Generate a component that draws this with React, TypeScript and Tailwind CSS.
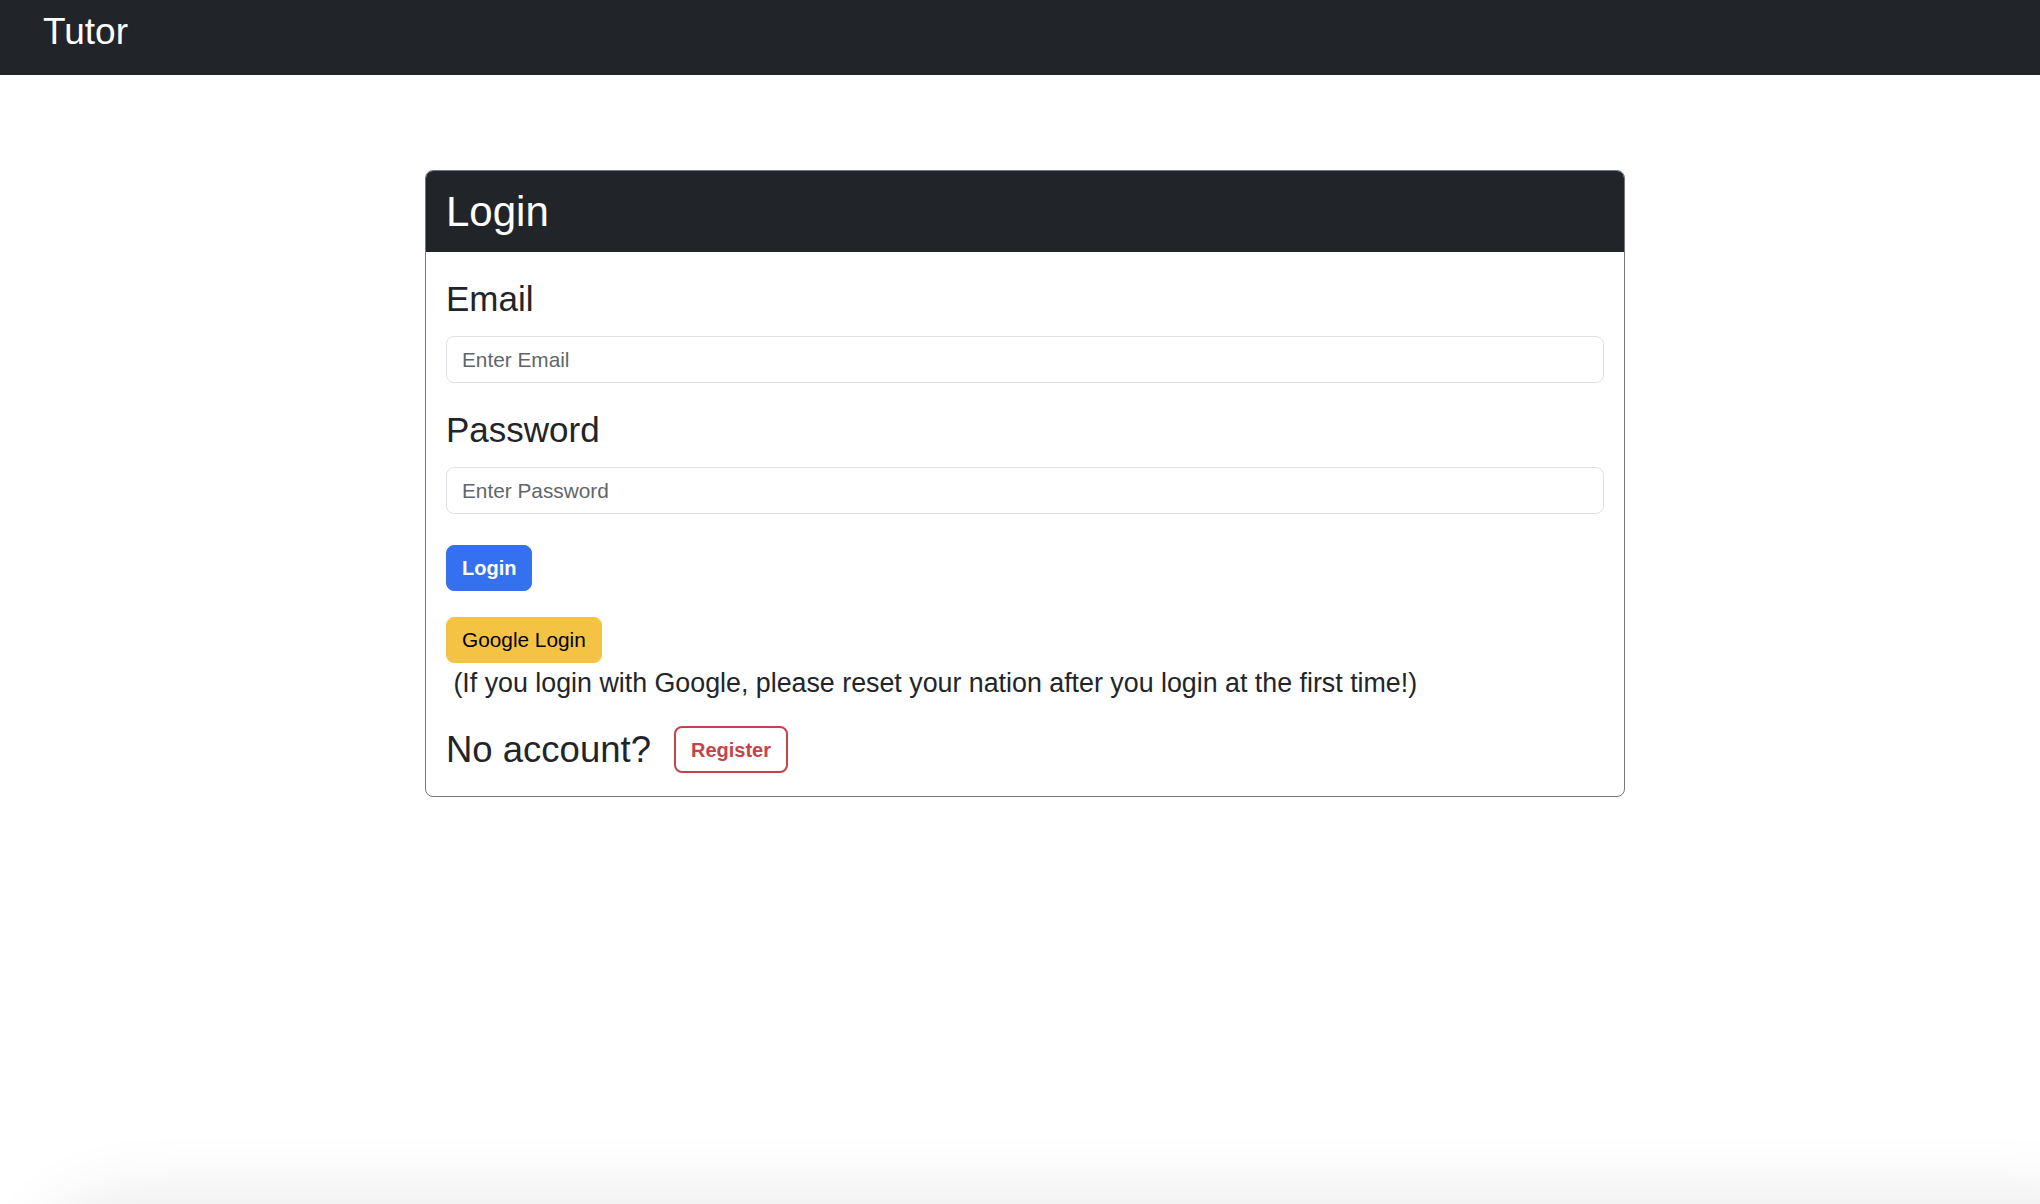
import React from 'react';

const LoginPage: React.FC = () => {
  return (
    <div className="h-screen flex flex-col overflow-hidden bg-white text-[#212529] font-['Liberation_Sans',Arial,sans-serif]">
      <nav className="h-[75px] shrink-0 bg-[#212529] pl-[43px] pt-[10px]">
        <span className="text-[37px] leading-[44px] text-white">Tutor</span>
      </nav>

      <main className="flex justify-center pl-[10px] pt-[95px]">
        <div className="w-[1200px] rounded-[8px] border border-[#73777b]">
          <div className="rounded-t-[7px] bg-[#212529] px-[20px] pt-[16px] pb-[15px]">
            <h2 className="text-[42px] leading-[50px] text-white">Login</h2>
          </div>

          <div className="px-[20px] pt-[26px] pb-[23px]">
            <h4 className="text-[35px] leading-[42px]">Email</h4>
            <input
              type="email"
              placeholder="Enter Email"
              className="mt-[16px] block h-[47px] w-full rounded-[8px] border border-[#dee2e6] px-[15px] text-[20.8px] outline-none placeholder:text-[#62666a]"
            />

            <h4 className="mt-[26px] text-[35px] leading-[42px]">Password</h4>
            <input
              type="password"
              placeholder="Enter Password"
              className="mt-[16px] block h-[47px] w-full rounded-[8px] border border-[#dee2e6] px-[15px] text-[20.8px] outline-none placeholder:text-[#62666a]"
            />

            <button className="mt-[31px] block h-[46px] rounded-[8px] border border-[#3470f0] bg-[#3470f0] px-[15px] text-[20px] font-bold text-white">
              Login
            </button>

            <button className="mt-[26px] block h-[46px] rounded-[8px] border border-[#f5c344] bg-[#f5c344] px-[15px] text-[20.8px] text-black">
              Google Login
            </button>
            <p className="text-[26.8px] leading-[41px]">
              &nbsp;(If you login with Google, please reset your nation after you login at the first time!)
            </p>

            <div className="mt-[22px] flex items-center gap-[23px]">
              <h3 className="text-[36.5px] leading-[47px]">No account?</h3>
              <button className="h-[47px] rounded-[8px] border-2 border-[#c4434b] px-[15px] text-[20px] font-bold text-[#c4434b]">
                Register
              </button>
            </div>
          </div>
        </div>
      </main>

      {/* faint shadow along the bottom edge */}
      <div className="relative mt-auto h-[90px] shrink-0 overflow-hidden">
        <div className="absolute left-[40px] right-[-100px] top-[95px] h-[200px] rounded-[90px] shadow-[0_0_70px_12px_rgba(0,0,0,0.09)]" />
      </div>
    </div>
  );
};

export default function App() {
  return <LoginPage />;
}
